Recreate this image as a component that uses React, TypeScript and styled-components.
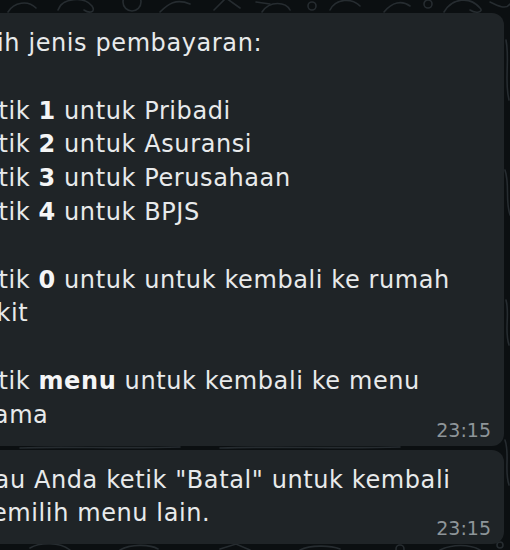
import styled, { createGlobalStyle } from "styled-components";

type Segment = { text: string; bold?: boolean };
type Message = { lines: Segment[][]; time: string };

const messages: Message[] = [
  {
    time: "23:15",
    lines: [
      [{ text: "Pilih jenis pembayaran:" }],
      [],
      [{ text: "Ketik " }, { text: "1", bold: true }, { text: " untuk Pribadi" }],
      [{ text: "Ketik " }, { text: "2", bold: true }, { text: " untuk Asuransi" }],
      [{ text: "Ketik " }, { text: "3", bold: true }, { text: " untuk Perusahaan" }],
      [{ text: "Ketik " }, { text: "4", bold: true }, { text: " untuk BPJS" }],
      [],
      [
        { text: "Ketik " },
        { text: "0", bold: true },
        { text: " untuk untuk kembali ke rumah" },
      ],
      [{ text: "sakit" }],
      [],
      [
        { text: "Ketik " },
        { text: "menu", bold: true },
        { text: " untuk kembali ke menu" },
      ],
      [{ text: "utama" }],
    ],
  },
  {
    time: "23:15",
    lines: [
      [{ text: 'Atau Anda ketik "Batal" untuk kembali' }],
      [{ text: "memilih menu lain." }],
    ],
  },
];

const GlobalStyle = createGlobalStyle`
  html, body {
    margin: 0;
    padding: 0;
    background: #0b0f11;
    overflow: hidden;
  }
`;

function Wallpaper() {
  return (
    <WallpaperSvg viewBox="0 0 510 550" preserveAspectRatio="none">
      <g fill="none" stroke="#262c30" strokeWidth="1.6" strokeLinecap="round">
        <path d="M8 12 C 14 2, 28 0, 36 8" />
        <path d="M58 10 C 62 -2, 84 -4, 92 6 C 96 12, 90 14, 84 10" />
        <circle cx="132" cy="2" r="9" />
        <path d="M160 12 C 168 4, 176 -2, 190 4" />
        <path d="M214 10 L 226 -2 L 240 8" />
        <path d="M262 12 C 270 0, 286 2, 290 10" />
        <path d="M256 2 L 270 4" />
        <circle cx="312" cy="6" r="4" />
        <path d="M330 10 C 336 -2, 352 -2, 360 6" />
        <path d="M384 12 C 392 2, 402 0, 410 6" />
        <circle cx="428" cy="4" r="4" />
        <path d="M444 12 C 452 -2, 470 -4, 480 8 C 484 12, 476 14, 470 10" />
        <path d="M490 2 C 498 6, 506 10, 510 4" />
        <path d="M506 40 C 510 60, 504 80, 509 100" />
        <path d="M505 170 C 510 185, 505 200, 510 215" />
        <path d="M506 300 C 510 315, 504 330, 509 345" />
        <path d="M505 440 C 510 455, 504 470, 509 485" />
        <path d="M20 448 C 60 446, 120 449, 180 447" />
        <path d="M220 448 C 280 446, 340 449, 400 447" />
        <path d="M30 548 C 40 542, 60 542, 70 550" />
        <path d="M120 550 C 130 544, 150 544, 158 549" />
        <path d="M220 549 L 236 544 L 250 550" />
        <path d="M300 550 C 310 545, 330 545, 340 549" />
        <circle cx="400" cy="549" r="4" />
        <path d="M440 550 C 452 544, 470 544, 480 550" />
        <circle cx="500" cy="545" r="3" />
      </g>
    </WallpaperSvg>
  );
}

function Bubble({ message }: { message: Message }) {
  return (
    <BubbleBox>
      <Body>
        {message.lines.map((line, i) => (
          <Line key={i}>
            {line.length === 0
              ? "\u00a0"
              : line.map((seg, j) =>
                  seg.bold ? <Strong key={j}>{seg.text}</Strong> : seg.text
                )}
          </Line>
        ))}
      </Body>
      <Meta>
        <Time>{message.time}</Time>
      </Meta>
    </BubbleBox>
  );
}

export default function App() {
  return (
    <>
      <GlobalStyle />
      <Screen>
        <Wallpaper />
        <Chat>
          {messages.map((m, i) => (
            <Bubble key={i} message={m} />
          ))}
        </Chat>
      </Screen>
    </>
  );
}

const Screen = styled.div`
  position: relative;
  width: 510px;
  height: 550px;
  overflow: hidden;
  background: #0b0f11;
`;

const WallpaperSvg = styled.svg`
  position: absolute;
  inset: 0;
  width: 100%;
  height: 100%;
`;

const Chat = styled.div`
  position: relative;
  display: flex;
  flex-direction: column;
  gap: 4px;
  width: 549px;
  margin-left: -45px;
  padding-top: 13px;
`;

const BubbleBox = styled.div`
  background: #1f2427;
  border-radius: 12px;
  padding: 14px 13px 5px 13px;
  font-family: "DejaVu Sans", "Noto Sans", sans-serif;
`;

const Body = styled.div`
  color: #e8eaeb;
  font-size: 24px;
  letter-spacing: 0.6px;
  line-height: 33.8px;
`;

const Line = styled.div`
  white-space: pre;
`;

const Strong = styled.span`
  font-weight: 700;
  color: #f4f5f6;
`;

const Meta = styled.div`
  display: flex;
  justify-content: flex-end;
  margin-top: -14px;
`;

const Time = styled.span`
  color: #8e9599;
  font-size: 19px;
  line-height: 22px;
`;
